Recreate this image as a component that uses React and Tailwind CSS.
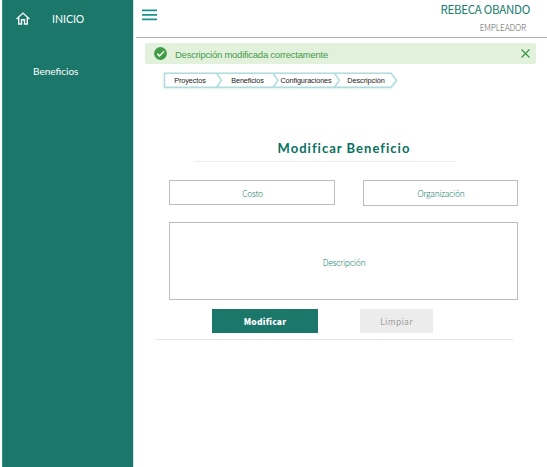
const lato = "font-['Lato','Liberation_Sans',sans-serif]";
const source = "font-['Noto_Sans_CJK_SC','Noto_Sans',sans-serif]";

function HomeIcon() {
  return (
    <svg className="block h-[13px] w-[14px]" viewBox="0 0 14 13" fill="none" stroke="#f4fbf8" strokeWidth="1.4">
      <path d="M0.6 6.9 7 1.1l6.4 5.8" />
      <path d="M2.7 5.4v6.6h2.8V7.8h3v4.2h2.8V5.4" />
    </svg>
  );
}

function Sidebar() {
  return (
    <aside className={`${lato} ml-[2px] h-full w-[131px] shrink-0 border-l border-[#3d8b7e] bg-[#1c776b] text-white`}>
      <div className="flex h-[37px] items-center pl-[13px]">
        <HomeIcon />
        <span className="ml-[22px] text-[10.5px] leading-[14px]">INICIO</span>
      </div>
      <div className="mt-[27px] pl-[30px] text-[10px] leading-[14px]">Beneficios</div>
    </aside>
  );
}

function Header() {
  return (
    <header className="ml-[2px] flex h-[38px] justify-between border-b border-[#b3b3b3]">
      <svg className="mt-[9px] ml-[6px] h-[12px] w-[15px]" viewBox="0 0 15 12" fill="none" stroke="#16938c" strokeWidth="1.6">
        <path d="M0 1.4h15M0 5.9h15M0 10.4h15" />
      </svg>
      <div className={`${source} text-right`}>
        <div className="mt-[1px] mr-[17px] text-[11.5px] leading-[16px] tracking-[-0.28px] text-[#147d6c]">REBECA OBANDO</div>
        <div className="mt-[4px] mr-[21px] text-[8.5px] leading-[12px] font-light tracking-[-0.2px] text-[#666]">EMPLEADOR</div>
      </div>
    </header>
  );
}

function Alert() {
  return (
    <div className="mt-[5px] ml-[11px] flex h-[21px] w-[391px] items-center rounded-[2px] bg-[#e2f1dc]">
      <svg className="ml-[9px] h-[13px] w-[13px]" viewBox="0 0 13 13" fill="none">
        <circle cx="6.5" cy="6.5" r="6.4" fill="#419b49" />
        <path d="m3.2 6.6 2.3 2.3L10 4.3" stroke="#f2faee" strokeWidth="1.5" />
      </svg>
      <span className="ml-[8px] pt-[2px] font-['Liberation_Sans',sans-serif] text-[9.5px] leading-[12px] tracking-[-0.24px] whitespace-nowrap text-[#469a4b]">
        Descripción modificada correctamente
      </span>
      <svg className="mr-[6px] ml-auto h-[9px] w-[9px]" viewBox="0 0 9 9" fill="none" stroke="#3c9746" strokeWidth="1.2">
        <path d="m0.5 0.5 8 8m0-8-8 8" />
      </svg>
    </div>
  );
}

function Breadcrumbs() {
  return (
    <nav className="relative mt-[8px] ml-[29px] h-[18px] w-[236px] font-['Liberation_Sans',sans-serif] text-[7.3px] leading-[16px] text-[#222]">
      <svg className="absolute inset-0 h-[18px] w-[236px] drop-shadow-[0_1px_1px_rgba(130,180,180,0.25)]" viewBox="0 0 236 18" fill="none" stroke="#b0dcde" strokeWidth="1.5">
        <path fill="#fff" d="M1.5 1.3h226.5l5.5 7-5.5 7H1.5z" />
        <path d="m53.5 1.3 5 7-5 7m56.5-14 5 7-5 7m61.5-14 5 7-5 7" />
      </svg>
      <div className="relative flex pt-[1px]">
        <span className="w-[54px] text-center tracking-[-0.1px]">Proyectos</span>
        <span className="w-[61px] text-center tracking-[-0.1px]">Beneficios</span>
        <span className="w-[56px] text-center tracking-[-0.1px]">Configuraciones</span>
        <span className="w-[64px] text-center tracking-[-0.05px]">Descripción</span>
      </div>
    </nav>
  );
}

function BenefitForm() {
  const field = "flex items-center justify-center border border-[#bdbdbd] text-[8.5px] font-light tracking-[-0.25px] text-[#1d8570]";
  return (
    <main className={source}>
      <h1 className={`${lato} mt-[49px] ml-[9px] w-[402px] text-center text-[13px] leading-[18px] font-bold tracking-[1.02px] text-[#08715f]`}>
        Modificar Beneficio
      </h1>
      <hr className="mt-[4px] ml-[61px] w-[261px] border-[#ececec]" />
      <div className="mt-[18px] ml-[35px] flex w-[349px] items-start justify-between">
        <div className={`${field} h-[25px] w-[166px] pt-[2px] pl-[1px]`}>Costo</div>
        <div className={`${field} h-[26px] w-[155px] pt-[1px] pl-[1px]`}>Organización</div>
      </div>
      <div className={`${field} mt-[16px] ml-[35px] h-[78px] w-[349px] pt-[2px] pl-[1px]`}>Descripción</div>
      <div className="mt-[9px] ml-[78px] flex">
        <button className="h-[24px] w-[106px] bg-[#1c776b] text-[8.5px] font-black tracking-[0.2px] text-white">Modificar</button>
        <button className="ml-[42px] h-[24px] w-[73px] bg-[#ececec] text-[8.5px] tracking-[0.3px] text-[#a0a0a0]">Limpiar</button>
      </div>
      <hr className="mt-[6px] ml-[22px] w-[357px] border-[#e6e6e6]" />
    </main>
  );
}

export default function App() {
  return (
    <div className="flex h-[467px] w-[547px] overflow-hidden bg-white">
      <Sidebar />
      <div className="min-w-0 flex-1 border-l border-[#d5e8e4]">
        <Header />
        <Alert />
        <Breadcrumbs />
        <BenefitForm />
      </div>
    </div>
  );
}
